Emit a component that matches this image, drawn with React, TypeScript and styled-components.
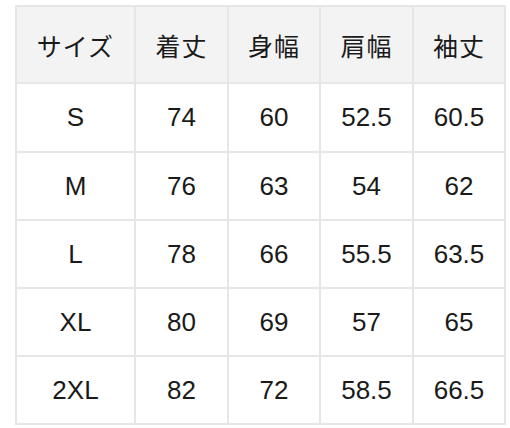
import React from "react";
import styled, { createGlobalStyle } from "styled-components";

const GlobalStyle = createGlobalStyle`
  html, body {
    margin: 0;
    padding: 0;
    background: #ffffff;
  }
`;

const Page = styled.div`
  padding: 5px 0 0 15px;
  font-family: "Liberation Sans", "Noto Sans CJK JP", sans-serif;
  color: #1a1a1a;
`;

const SizeGrid = styled.div`
  display: grid;
  grid-template-columns: 117px 91px 90px 91px 90px;
  grid-template-rows: 75px 67px 66px 66px 66px 66px;
  gap: 2px;
  padding: 2px;
  width: max-content;
  background: #e6e6e6;
`;

const Cell = styled.div<{ $head?: boolean }>`
  display: flex;
  align-items: center;
  justify-content: center;
  background: ${(p) => (p.$head ? "#f3f3f3" : "#ffffff")};
  font-size: ${(p) => (p.$head ? "25px" : "26px")};
  letter-spacing: ${(p) => (p.$head ? "1px" : "0")};
`;

const headers = ["サイズ", "着丈", "身幅", "肩幅", "袖丈"];

const rows: string[][] = [
  ["S", "74", "60", "52.5", "60.5"],
  ["M", "76", "63", "54", "62"],
  ["L", "78", "66", "55.5", "63.5"],
  ["XL", "80", "69", "57", "65"],
  ["2XL", "82", "72", "58.5", "66.5"],
];

export default function App() {
  return (
    <>
      <GlobalStyle />
      <Page>
        <SizeGrid>
          {headers.map((h) => (
            <Cell key={h} $head>
              {h}
            </Cell>
          ))}
          {rows.map((row) =>
            row.map((v, i) => <Cell key={row[0] + i}>{v}</Cell>)
          )}
        </SizeGrid>
      </Page>
    </>
  );
}
